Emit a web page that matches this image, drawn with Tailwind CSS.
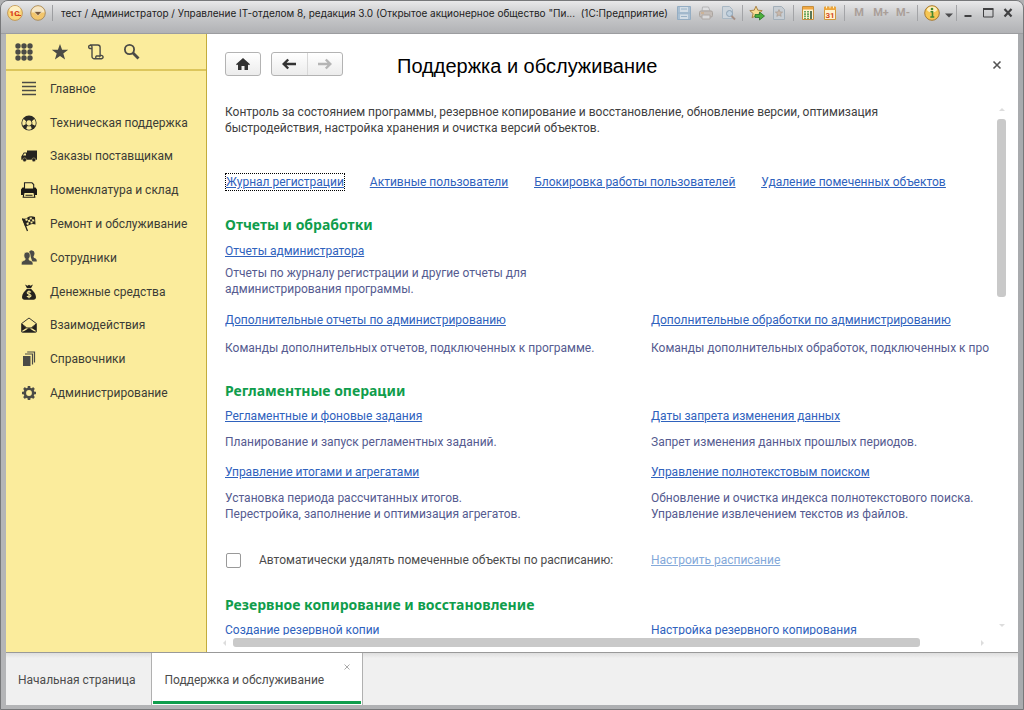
<!DOCTYPE html>
<html lang="ru">
<head>
  <meta charset="UTF-8" />
  <meta name="viewport" content="width=device-width, initial-scale=1.0" />
  <title>Поддержка и обслуживание</title>
  <script src="https://cdn.jsdelivr.net/npm/@tailwindcss/browser@4"></script>
</head>
<body class="h-screen bg-[#b0b1b3] font-[Roboto,'Liberation_Sans',sans-serif] text-[12px] leading-4 text-[#404040]">

  <div class="flex h-full flex-col overflow-hidden rounded-t-lg border border-[#77787a] bg-linear-to-r from-[#b4b5b7] to-[#a9abae] px-[5px] pb-1">

    <!-- Title bar -->
    <header class="-mx-[5px] flex h-[33px] shrink-0 items-start border-b border-[#9c9da0] bg-linear-to-b from-[#e9e9ea] via-[#c6c7c9] to-[#b1b2b5] px-[5px] text-[#222]">
      <button type="button" aria-label="Меню 1С" class="mt-1 ml-px h-4 w-4">
        <svg viewBox="0 0 16 16" class="h-4 w-4"><circle cx="8" cy="8" r="7.400" fill="#fbd77c" stroke="#b98a45" stroke-width=".8"/><ellipse cx="8" cy="4.600" rx="5.500" ry="3.500" fill="#fdf0c4"/><text x="7.500" y="11" text-anchor="middle" font-size="8" font-weight="900" fill="#d8401f">1С</text><path d="M8.500 10.500h5.500" stroke="#d8401f" stroke-width="1.200"/></svg>
      </button>
      <button type="button" aria-label="Команды" class="mt-1 ml-[7px] h-4 w-4">
        <svg viewBox="0 0 16 16" class="h-4 w-4"><circle cx="8" cy="8" r="7.300" fill="#f3c66c" stroke="#a98d62"/><path d="M1.500 7.500a6.500 6.300 0 0 1 13 0z" fill="#f6e6c4"/><path d="M4 6.500h8L8 10.800z" fill="#76573b" stroke="#fff3d6" stroke-width=".6"/></svg>
      </button>
      <span class="mt-1 ml-1.5 h-4 w-px bg-[#9d9ea1]"></span>
      <h1 class="mt-1 ml-2 min-w-0 flex-1 overflow-hidden font-[Inter,sans-serif] text-[10px] whitespace-pre">тест / Администратор / Управление IT-отделом 8, редакция 3.0 (Открытое акционерное общество "Пи...  (1С:Предприятие)</h1>

      <div class="mt-1 flex h-4 shrink-0 items-center text-[11px] font-bold text-[#aa9f99]">
        <button type="button" aria-label="Сохранить" class="flex w-[22px] justify-center">
          <svg viewBox="0 0 16 16" class="h-4 w-4"><path d="M1.500 1.500h13v13h-13z" fill="#a9bfd2" stroke="#94adc3"/><path d="M4 2h8v5H4zM4 9.500h8V14H4z" fill="#d3dde5"/><path d="M5 4h6M5 11.500h6M2 8h12" stroke="#9ab2c6"/></svg>
        </button>
        <button type="button" aria-label="Печать" class="flex w-[22px] justify-center">
          <svg viewBox="0 0 16 16" class="h-4 w-4"><path d="M4.500 2h6l1.500 4H4z" fill="#dedfe1" stroke="#b5b5b7"/><rect x="1.500" y="6" width="13" height="6" rx="1.500" fill="#c4bdb8" stroke="#aaa49f"/><path d="M4 10h8v4H4z" fill="#d9d9da" stroke="#aea8a5"/><path d="M3 8h3" stroke="#d3a878"/></svg>
        </button>
        <button type="button" aria-label="Просмотр" class="flex w-[22px] justify-center">
          <svg viewBox="0 0 16 16" class="h-4 w-4"><path d="M2.500 1.500h7l3 3v9h-10z" fill="#cdd5dc" stroke="#a9b8c4"/><circle cx="9.500" cy="8.500" r="3" fill="#bfd0de" stroke="#8fa3b4"/><path d="M11.500 11l3.500 3.500" stroke="#a58f85" stroke-width="2"/></svg>
        </button>
        <span class="mx-[3px] h-4 w-px bg-[#a3a4a7]"></span>
        <button type="button" aria-label="Добавить в избранное" class="flex w-[22px] justify-center">
          <svg viewBox="0 0 16 16" class="h-4 w-4"><path d="M7 1.200l1.800 4 4.400.4-3.300 2.900 1 4.300L7 10.600l-3.900 2.200 1-4.300L.8 5.600l4.400-.4z" fill="#f8dc92" stroke="#a98347"/><path d="M6 9.500h4.500V7l5 4-5 4v-2.500H6z" fill="#4bae3c" stroke="#26752a" stroke-width=".8"/></svg>
        </button>
        <button type="button" aria-label="Избранное" class="flex w-[22px] justify-center">
          <svg viewBox="0 0 16 16" class="h-4 w-4"><path d="M2.500 1.500h8l3 3v10h-11z" fill="#c8ced4" stroke="#a3afb9"/><path d="M8 4.500l1 2.400 2.600.2-2 1.700.6 2.600L8 10l-2.200 1.400.6-2.600-2-1.700 2.600-.2z" fill="#c9b8aa" stroke="#a3958b" stroke-width=".6"/></svg>
        </button>
        <span class="mx-[3px] h-4 w-px bg-[#a3a4a7]"></span>
        <button type="button" aria-label="Калькулятор" class="flex w-[22px] justify-center">
          <svg viewBox="0 0 16 16" class="h-4 w-4"><path d="M2.500 1.500h11v13h-11z" fill="#fff4d2" stroke="#c58e3d"/><path d="M3 2h10v2.500H3z" fill="#f1a843"/><path d="M5 6v8M8 6v8" stroke="#5a9f56" stroke-width="1.800" stroke-dasharray="1.600 .7"/><path d="M11 6v8" stroke="#49694a" stroke-width="1.800"/></svg>
        </button>
        <button type="button" aria-label="Календарь" class="flex w-[22px] justify-center">
          <svg viewBox="0 0 16 16" class="h-4 w-4"><path d="M2.500 2h11v12.500h-11z" fill="#fff3d0" stroke="#d0983f"/><path d="M2 2h12v3H2z" fill="#eda53b"/><path d="M4.500.8v2.500M8 .8v2.500M11.500.8v2.500" stroke="#fff0c9"/><text x="8" y="13" text-anchor="middle" font-size="8" fill="#d5481d">31</text></svg>
        </button>
        <span class="mx-[3px] h-4 w-px bg-[#a3a4a7]"></span>
        <button type="button" class="w-[22px]">M</button>
        <button type="button" class="w-[22px]">M+</button>
        <button type="button" class="w-[22px]">M-</button>
        <span class="mx-[3px] h-4 w-px bg-[#a3a4a7]"></span>
        <button type="button" aria-label="Информация" class="flex w-[22px] justify-center">
          <svg viewBox="0 0 16 16" class="h-4 w-4"><circle cx="8" cy="8" r="7.300" fill="#f7c653" stroke="#a77a31"/><ellipse cx="8" cy="4.500" rx="5" ry="3" fill="#fdf0bf"/><path d="M6.500 6.800H8.500V12M6.300 12h4" fill="none" stroke="#43872e" stroke-width="1.600"/><circle cx="8" cy="4" r="1.300" fill="#43872e"/></svg>
        </button>
        <button type="button" aria-label="Ещё" class="flex w-3 justify-center pt-1">
          <svg viewBox="0 0 8 5" class="h-[5px] w-2"><path d="M0 .5h8l-4 4z" fill="#4b4b4d"/></svg>
        </button>
        <span class="mx-px h-4 w-px bg-[#a3a4a7]"></span>
        <button type="button" aria-label="Свернуть" class="flex w-5 justify-center">
          <svg viewBox="0 0 12 12" class="h-3 w-3"><path d="M2.500 9h7" stroke="#404042" stroke-width="2"/></svg>
        </button>
        <button type="button" aria-label="Развернуть" class="flex w-5 justify-center">
          <svg viewBox="0 0 12 12" class="h-3 w-3"><path d="M1.500 2.500h9.500v7.500h-9.500z" fill="none" stroke="#404042"/><path d="M1 2h10.500" stroke="#404042" stroke-width="2"/></svg>
        </button>
        <button type="button" aria-label="Закрыть" class="flex w-5 justify-center">
          <svg viewBox="0 0 12 12" class="h-3 w-3"><path d="M2.500 2l7 7.500M9.500 2l-7 7.500" stroke="#404042" stroke-width="2.200"/></svg>
        </button>
      </div>
    </header>

    <div class="flex min-h-0 flex-1 bg-white">

      <!-- Sections panel -->
      <aside class="w-[201px] shrink-0 border-r border-[#c3ac3c] bg-[#fbec9c]">
        <div class="flex h-[37px] items-center gap-[18px] border-b-2 border-[#dcc65c] pl-[9px] text-[#4b4b46]">
          <button type="button" aria-label="Все функции">
            <svg viewBox="0 0 18 18" class="h-[18px] w-[18px]" fill="currentColor"><circle cx="3" cy="3" r="2.700"/><circle cx="9" cy="3" r="2.700"/><circle cx="15" cy="3" r="2.700"/><circle cx="3" cy="9" r="2.700"/><circle cx="9" cy="9" r="2.700"/><circle cx="15" cy="9" r="2.700"/><circle cx="3" cy="15" r="2.700"/><circle cx="9" cy="15" r="2.700"/><circle cx="15" cy="15" r="2.700"/></svg>
          </button>
          <button type="button" aria-label="Избранное">
            <svg viewBox="0 0 18 18" class="h-[18px] w-[18px]" fill="currentColor"><path d="M9 1l2.100 5.700 6.100.1-4.900 3.700 1.800 6L9 13l-5.100 3.500 1.800-6L.8 6.800l6.100-.1z"/></svg>
          </button>
          <button type="button" aria-label="История">
            <svg viewBox="0 0 18 18" class="h-[18px] w-[18px]" fill="none" stroke="currentColor" stroke-width="1.400"><path d="M5 5.500H2.800a1.700 1.700 0 1 1 2.200-1.800V13.500a2.300 2.300 0 0 0 2.300 2.300h7.200a1.700 1.700 0 1 0-1.400-2.800V4.300a2.300 2.300 0 0 0-2.300-2.300H3M13 13H9.500c-1 .3-1 2-.2 2.800"/></svg>
          </button>
          <button type="button" aria-label="Поиск">
            <svg viewBox="0 0 18 18" class="h-[18px] w-[18px]" fill="none" stroke="currentColor"><circle cx="6.500" cy="6.500" r="4.600" stroke-width="1.800"/><path d="M10 10l5.500 5.500" stroke-width="2.800"/></svg>
          </button>
        </div>

        <nav class="mt-px grid h-[338px] auto-rows-fr text-[#3c3c36]">
          <a href="#" class="flex items-center gap-[13px] pl-[15px]">
            <svg viewBox="0 0 16 16" class="h-4 w-4" stroke="#4b4b46" stroke-width="1.600"><path d="M1 1.500h14M1 5.500h14M1 9.500h14M1 13.500h14"/></svg>Главное</a>
          <a href="#" class="flex items-center gap-[13px] pl-[15px]">
            <svg viewBox="0 0 16 16" class="h-4 w-4"><circle cx="8" cy="8" r="7.600" fill="#2a2a26"/><path d="M2.700 4l2.400 2.200a3.500 3.500 0 0 0-.3 3L1.900 10.700A6.500 6.500 0 0 1 2.700 4zM13.300 4l-2.400 2.200a3.500 3.500 0 0 1 .3 3l2.900 1.500A6.500 6.500 0 0 0 13.300 4zM6 11.200h4l.7 2.900a6.500 6.500 0 0 1-5.400 0zM8 5.300a2.700 2.700 0 1 1-.1 0z" fill="#fbec9c"/></svg>Техническая поддержка</a>
          <a href="#" class="flex items-center gap-[13px] pl-[15px]">
            <svg viewBox="0 0 16 16" class="h-4 w-4"><path d="M6 2.500H16v9.300H.3V8.500L2.800 4.500H6z" fill="#26241f"/><path d="M3.200 5.500h1.800v2H2z" fill="#fbec9c"/><circle cx="3.600" cy="11.800" r="1.900" fill="#26241f" stroke="#fbec9c" stroke-width=".4"/><circle cx="12.800" cy="11.800" r="1.900" fill="#26241f" stroke="#fbec9c" stroke-width=".4"/></svg>Заказы поставщикам</a>
          <a href="#" class="flex items-center gap-[13px] pl-[15px]">
            <svg viewBox="0 0 16 16" class="h-4 w-4"><path d="M3.500.8h7.500l1.700 1.700V7H3.500z" fill="#fbec9c" stroke="#222" stroke-width="1.100"/><path d="M1.500 5.500h2V7h9V5.500h2L16 7.500V13H0V7.500z" fill="#1b1a17"/><path d="M3 10.500h10l.8 4.800H2.200z" fill="#fbec9c" stroke="#1b1a17" stroke-width="1.100"/><path d="M4.500 13.200h7" stroke="#1b1a17" stroke-width="1.100"/></svg>Номенклатура и склад</a>
          <a href="#" class="flex items-center gap-[13px] pl-[15px]">
            <svg viewBox="0 0 16 16" class="h-4 w-4"><path d="M1.500 2.500l5 12.500" stroke="#26241f" stroke-width="1.300"/><path d="M1 2.500Q4 3.500 6.500 1.500T14 1l.5 7.500Q11 7.500 8.500 9T4 10z" fill="#26241f"/><path d="M4.200 3l2-.8.7 2-2 .9zM8.600 1.700l2-.5.3 2-2 .2zM6.900 4.300l2-.9.4 2.200-1.800.6zM11 3.200l2.200.2.2 2-2.100-.2zM5.400 7l2-.8.5 2-1.900.7zM9.400 5.600l2-.4.2 2-1.900.3z" fill="#fbec9c"/></svg>Ремонт и обслуживание</a>
          <a href="#" class="flex items-center gap-[13px] pl-[15px]">
            <svg viewBox="0 0 16 16" class="h-4 w-4"><path d="M8 2a2.900 2.900 0 0 1 5.500 1c0 2-.7 2.900-1 3.500 0 1 .3 1.200 1.500 1.800 1.500.6 1.800 1.400 1.800 3.200h-4.500z" fill="#4b4b46"/><path d="M6 2a3 3 0 0 1 3.200 3c0 1.700-.6 2.900-1.200 3.500v1.300c.5.8 3.800.8 4 3.200v2H.3v-2c.2-2.400 3.300-2.400 3.800-3.200V8.500C3.400 7.900 2.900 6.700 2.900 5A3 3 0 0 1 6 2z" fill="#4b4b46" stroke="#fbec9c" stroke-width=".7"/></svg>Сотрудники</a>
          <a href="#" class="flex items-center gap-[13px] pl-[15px]">
            <svg viewBox="0 0 16 16" class="h-4 w-4"><path d="M4 .5l2.500 1.300L8 .7l1.500 1.100L12 .5l-2 3.700H6z" fill="#24221e"/><path d="M5.800 4.900h4.400c2 2 4.800 4.700 4.800 8.200 0 1.800-1.100 2.600-2.500 2.600h-9C2.100 15.700 1 14.900 1 13.100c0-3.500 2.800-6.200 4.800-8.200z" fill="#24221e"/><path d="M10 8.300C8.700 7 6 7.400 6.200 9c.2 1.700 3.800.8 3.800 2.700 0 1.700-2.900 1.800-4.100.5M8 6.500v7.700" fill="none" stroke="#fbec9c" stroke-width="1.100"/></svg>Денежные средства</a>
          <a href="#" class="flex items-center gap-[13px] pl-[15px]">
            <svg viewBox="0 0 16 16" class="h-4 w-4"><path d="M.7 6.500L8 1l7.300 5.500V15H.7z" fill="#fbec9c" stroke="#3a3832"/><path d="M.7 7l4.800 4L.7 14zM15.300 7l-4.800 4 4.800 3zM1 15.500l7-4.500 7 4.500z" fill="#24221e"/><path d="M.7 6.800L5.800 11h4.400l5.100-4.200" fill="none" stroke="#24221e"/></svg>Взаимодействия</a>
          <a href="#" class="flex items-center gap-[13px] pl-[15px]">
            <svg viewBox="0 0 16 16" class="h-4 w-4"><path d="M2 5h7.500v10H2z" fill="#4b4b46"/><path d="M4 3h7.500v10.500M6.200 1h7.300v10.500" fill="none" stroke="#4b4b46" stroke-width="1.200"/></svg>Справочники</a>
          <a href="#" class="flex items-center gap-[13px] pl-[15px]">
            <svg viewBox="0 0 16 16" class="h-4 w-4" fill="none" stroke="#4b4b46"><circle cx="8" cy="8" r="4.200" stroke-width="2.600"/><path d="M8 1v2.500M8 12.500V15M1 8h2.500M12.500 8H15M3 3l1.800 1.800M11.200 11.200L13 13M13 3l-1.800 1.800M4.800 11.200L3 13" stroke-width="2.600"/></svg>Администрирование</a>
        </nav>
      </aside>

      <!-- Form -->
      <main class="flex min-w-0 flex-1 flex-col pl-[18px]">
        <div class="flex h-[70px] shrink-0 items-start pt-[18px]">
          <button type="button" aria-label="Домой" class="flex h-6 w-9 items-center justify-center rounded-[3px] border border-[#b3b3b3] bg-linear-to-b from-white to-[#ececec]">
            <svg viewBox="0 0 14 12" class="h-3 w-[14px]" fill="#333"><path d="M7 0l7 6.300-1 .9-1-.8V12H8.500V8h-3v4H2V6.400l-1 .8-1-.9z"/></svg>
          </button>
          <div class="ml-[10px] flex h-6 w-[72px] rounded-[3px] border border-[#b3b3b3] bg-linear-to-b from-white to-[#ececec]">
            <button type="button" aria-label="Назад" class="flex flex-1 items-center justify-center border-r border-[#d8d8d8]">
              <svg viewBox="0 0 14 12" class="h-3 w-[14px]" fill="none" stroke="#333" stroke-width="2.400"><path d="M14 6H2M6.200 1.500L1.700 6l4.500 4.500"/></svg>
            </button>
            <button type="button" aria-label="Вперед" class="flex flex-1 items-center justify-center">
              <svg viewBox="0 0 14 12" class="h-3 w-[14px]" fill="none" stroke="#b5b5b5" stroke-width="2.400"><path d="M0 6h12M7.800 1.500L12.300 6l-4.500 4.500"/></svg>
            </button>
          </div>
          <h2 class="ml-[54px] flex-1 font-['Liberation_Sans',Arial,sans-serif] text-[20px] leading-7 text-black">Поддержка и обслуживание</h2>
          <button type="button" aria-label="Закрыть форму" class="mt-2 mr-4">
            <svg viewBox="0 0 10 10" class="h-[10px] w-[10px]" stroke="#555" stroke-width="1.600"><path d="M1.500 1.500l7 7M8.500 1.500l-7 7"/></svg>
          </button>
        </div>

        <div class="flex min-h-0 flex-1">
          <div class="min-w-0 flex-1 overflow-hidden whitespace-nowrap text-[#555b90]">
            <p class="text-[#404040]">Контроль за состоянием программы, резервное копирование и восстановление, обновление версии, оптимизация<br />быстродействия, настройка хранения и очистка версий объектов.</p>

            <div class="mt-[38px] flex gap-[26px] pl-px text-[#2f62bd] underline">
              <a href="#" class="outline-1 outline-dotted outline-black">Журнал регистрации</a>
              <a href="#">Активные пользователи</a>
              <a href="#">Блокировка работы пользователей</a>
              <a href="#">Удаление помеченных объектов</a>
            </div>

            <h3 class="mt-[27px] font-['Noto_Sans',sans-serif] text-[14px] leading-4 font-bold text-[#0f9d4c]">Отчеты и обработки</h3>
            <a href="#" class="mt-[10px] block text-[#2f62bd] underline">Отчеты администратора</a>
            <p class="mt-[6px]">Отчеты по журналу регистрации и другие отчеты для<br />администрирования программы.</p>
            <div class="mt-[15px] grid grid-cols-[426px_1fr]">
              <div>
                <a href="#" class="text-[#2f62bd] underline">Дополнительные отчеты по администрированию</a>
                <p class="mt-3">Команды дополнительных отчетов, подключенных к программе.</p>
              </div>
              <div>
                <a href="#" class="text-[#2f62bd] underline">Дополнительные обработки по администрированию</a>
                <p class="mt-3">Команды дополнительных обработок, подключенных к про</p>
              </div>
            </div>

            <h3 class="mt-[27px] font-['Noto_Sans',sans-serif] text-[14px] leading-4 font-bold text-[#0f9d4c]">Регламентные операции</h3>
            <div class="mt-[9px] grid grid-cols-[426px_1fr] gap-y-[14px]">
              <div>
                <a href="#" class="text-[#2f62bd] underline">Регламентные и фоновые задания</a>
                <p class="mt-[10px]">Планирование и запуск регламентных заданий.</p>
              </div>
              <div>
                <a href="#" class="text-[#2f62bd] underline">Даты запрета изменения данных</a>
                <p class="mt-[10px]">Запрет изменения данных прошлых периодов.</p>
              </div>
              <div>
                <a href="#" class="text-[#2f62bd] underline">Управление итогами и агрегатами</a>
                <p class="mt-[10px]">Установка периода рассчитанных итогов.<br />Перестройка, заполнение и оптимизация агрегатов.</p>
              </div>
              <div>
                <a href="#" class="text-[#2f62bd] underline">Управление полнотекстовым поиском</a>
                <p class="mt-[10px]">Обновление и очистка индекса полнотекстового поиска.<br />Управление извлечением текстов из файлов.</p>
              </div>
            </div>

            <div class="mt-[30px] grid grid-cols-[426px_1fr] items-center">
              <label class="flex items-center gap-[18px] text-[#4c4c4c]">
                <input type="checkbox" class="ml-px h-[15px] w-[15px] appearance-none rounded-[2px] border border-[#999] bg-white" />
                Автоматически удалять помеченные объекты по расписанию:
              </label>
              <a href="#" class="text-[#84a9da] underline">Настроить расписание</a>
            </div>

            <h3 class="mt-[29px] font-['Noto_Sans',sans-serif] text-[14px] leading-4 font-bold text-[#0f9d4c]">Резервное копирование и восстановление</h3>
            <div class="mt-[9px] grid grid-cols-[426px_1fr] text-[#2f62bd] underline">
              <a href="#">Создание резервной копии</a>
              <a href="#">Настройка резервного копирования</a>
            </div>
          </div>

          <!-- Vertical scroll bar -->
          <div class="mr-3 ml-1 flex w-[9px] shrink-0 flex-col items-center pt-1 pb-2">
            <svg viewBox="0 0 6 3" class="h-[3px] w-[6px]" fill="#ddd"><path d="M0 3l3-3 3 3z"/></svg>
            <div class="mt-2 h-[178px] w-full rounded-[3px] bg-[#c9c9c9]"></div>
            <svg viewBox="0 0 6 3" class="mt-auto h-[3px] w-[6px]" fill="#ddd"><path d="M0 0l3 3 3-3z"/></svg>
          </div>
        </div>

        <!-- Horizontal scroll bar -->
        <div class="mt-[3px] mr-[34px] mb-[5px] flex h-[9px] shrink-0 items-center">
          <svg viewBox="0 0 3 6" class="-ml-0.5 h-[6px] w-[3px]" fill="#ddd"><path d="M3 0L0 3l3 3z"/></svg>
          <div class="mr-[61px] ml-[7px] h-full flex-1 rounded-[3px] bg-[#c9c9c9]"></div>
          <svg viewBox="0 0 3 6" class="h-[6px] w-[3px]" fill="#ddd"><path d="M0 0l3 3-3 3z"/></svg>
        </div>
      </main>
    </div>

    <!-- Open windows -->
    <footer class="flex h-[53px] shrink-0 border-t border-[#999] bg-linear-to-b from-[#dedede] to-[#f0f0f0] to-10% text-[#4c4c4c]">
      <button type="button" class="pt-px pr-4 pl-3 text-left">Начальная страница</button>
      <div class="relative flex w-[212px] items-center border-x border-[#b0b0b0] bg-white">
        <button type="button" class="h-full flex-1 pt-px pl-3 text-left">Поддержка и обслуживание</button>
        <button type="button" aria-label="Закрыть вкладку" class="absolute top-[11px] right-3">
          <svg viewBox="0 0 6 6" class="h-[6px] w-[6px]" stroke="#aaa"><path d="M.5.5l5 5M5.500.5l-5 5"/></svg>
        </button>
        <span class="absolute inset-x-px bottom-px h-[3px] bg-[#0f9d4c]"></span>
      </div>
    </footer>
  </div>

</body>
</html>
